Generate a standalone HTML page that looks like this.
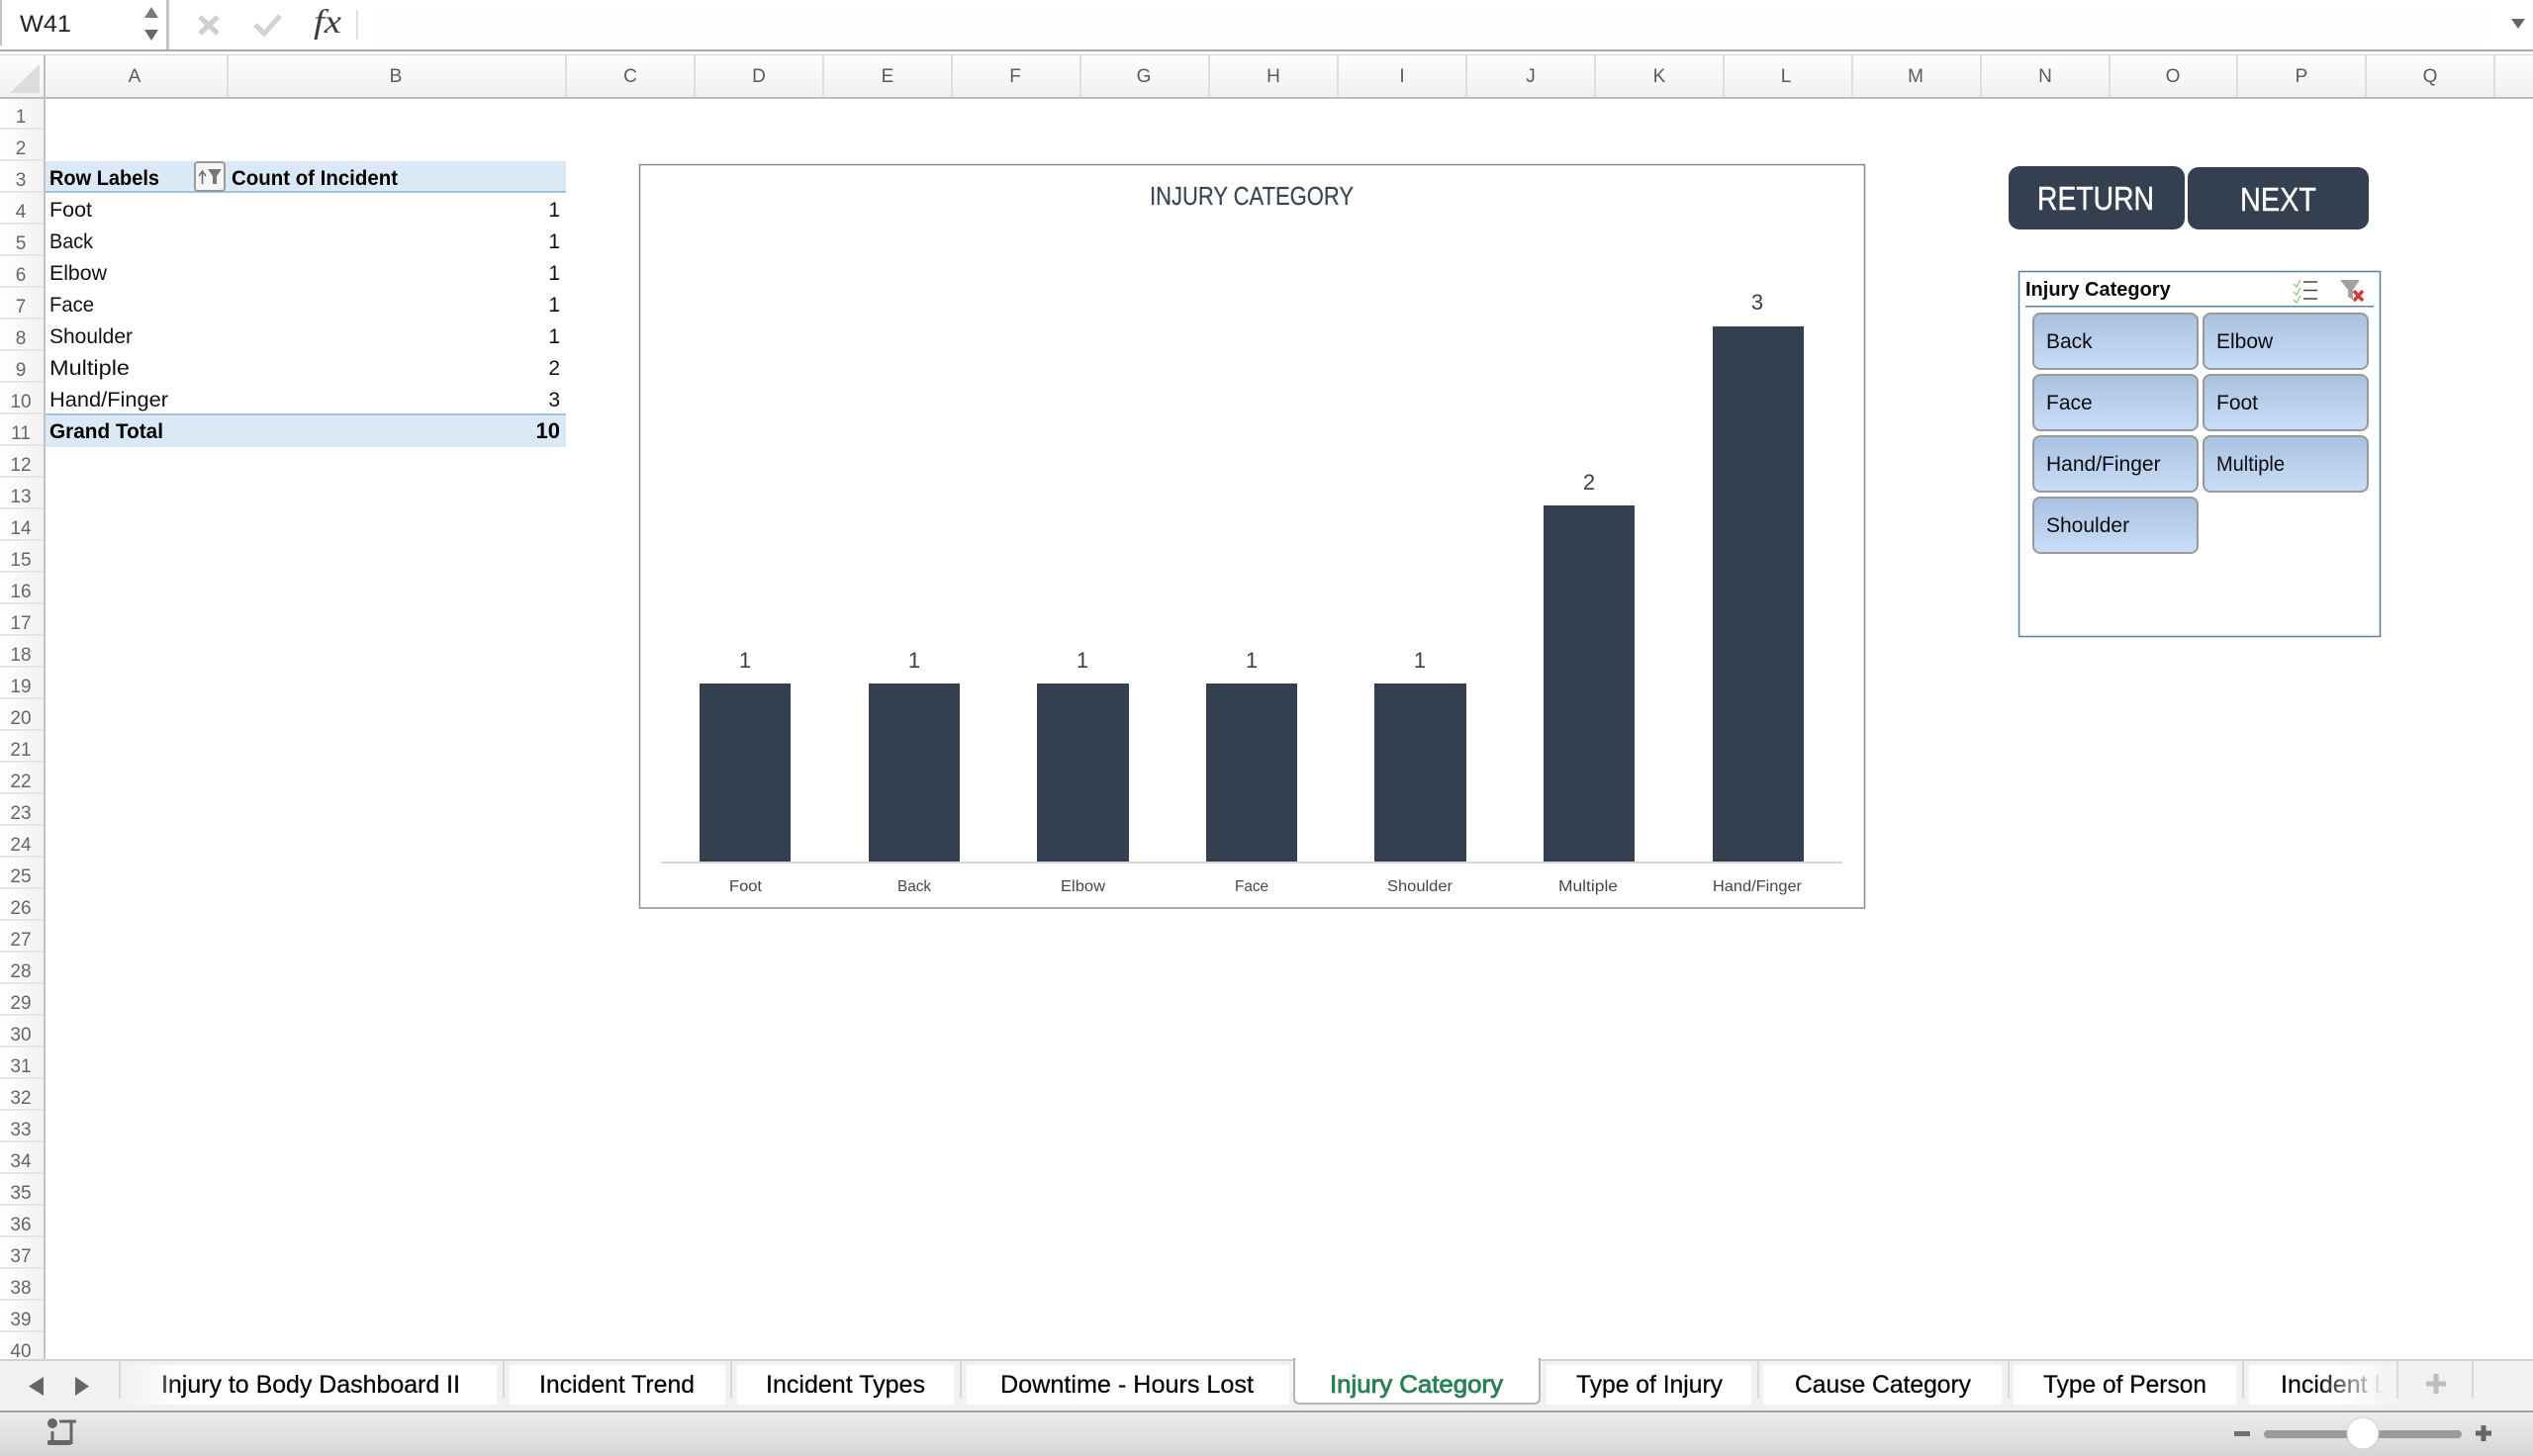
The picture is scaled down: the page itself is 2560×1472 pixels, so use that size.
<!DOCTYPE html>
<html lang="en">
<head>
<meta charset="utf-8">
<title>Injury Category</title>
<style>
html,body{margin:0;padding:0;background:#fff;width:2560px;height:1472px;overflow:hidden}
svg{display:block;position:absolute;left:0;top:0}
text{font-family:"Liberation Sans",sans-serif}
.rn{font-size:19px;fill:#666;text-anchor:middle}
.cn{font-size:19px;fill:#5a5a5a;text-anchor:middle}
.p{font-size:21px;fill:#111}
.b{font-size:21px;fill:#000;font-weight:bold}
.v{font-size:21px;fill:#111;text-anchor:end}
.d{font-size:22px;fill:#3c3f46;text-anchor:middle}
.a{font-size:16px;fill:#3f4857}
.s{font-size:21px;fill:#0c0c0c}
.t{font-size:25px;fill:#050505;stroke:#050505;stroke-width:.25px}
</style>
</head>
<body>
<svg width="2560" height="1472" viewBox="0 0 2560 1472" xmlns="http://www.w3.org/2000/svg">
<defs>
<linearGradient id="rh" x1="0" x2="1" y1="0" y2="0"><stop offset="0" stop-color="#ffffff"/><stop offset="1" stop-color="#f1f1f1"/></linearGradient>
<linearGradient id="ch" x1="0" x2="0" y1="0" y2="1"><stop offset="0" stop-color="#fdfdfd"/><stop offset="1" stop-color="#f1f1f1"/></linearGradient>
<linearGradient id="sb" x1="0" x2="0" y1="0" y2="1"><stop offset="0" stop-color="#ececec"/><stop offset="1" stop-color="#d6d6d6"/></linearGradient>
<linearGradient id="btn" x1="0" x2="0" y1="0" y2="1"><stop offset="0" stop-color="#a9c1e1"/><stop offset="1" stop-color="#c9ddf6"/></linearGradient>
<linearGradient id="fl" x1="0" x2="1" y1="0" y2="0"><stop offset="0" stop-color="#f1f1f1"/><stop offset="1" stop-color="#f1f1f1" stop-opacity="0"/></linearGradient>
<linearGradient id="fr" x1="0" x2="1" y1="0" y2="0"><stop offset="0" stop-color="#ffffff" stop-opacity="0"/><stop offset="1" stop-color="#f4f4f4"/></linearGradient>
<pattern id="rl" x="0" y="99" width="46" height="32" patternUnits="userSpaceOnUse"><rect x="0" y="30" width="46" height="2" fill="#e6e6e6"/></pattern>
<clipPath id="lastTab"><rect x="2273" y="1380" width="149" height="40"/></clipPath>
</defs>

<!-- formula bar -->
<rect x="0" y="0" width="2560" height="50" fill="#ffffff"/>
<rect x="375" y="7" width="2140" height="36" fill="#fefefe"/>
<rect x="0" y="0" width="2" height="46" fill="#c4c4c4"/>
<rect x="168" y="0" width="3" height="50" fill="#c6c6c6"/>
<text x="20" y="32" font-size="24" fill="#222" textLength="52" lengthAdjust="spacingAndGlyphs">W41</text>
<polygon points="153,7 146,18 160,18" fill="#7a7a7a"/>
<polygon points="153,41 146,30 160,30" fill="#6a6a6a"/>
<path d="M202 17 L220 34 M220 17 L202 34" stroke="#cfcfcf" stroke-width="5" fill="none"/>
<path d="M258 25 L267 34 L283 16" stroke="#d2d2d2" stroke-width="5" fill="none"/>
<text x="317" y="33" font-size="34" fill="#3c3c3c" style="font-family:'Liberation Serif',serif;font-style:italic" textLength="28" lengthAdjust="spacingAndGlyphs">fx</text>
<rect x="360" y="10" width="2" height="30" fill="#e0e0e0"/>
<polygon points="2538,19 2552,19 2545,29" fill="#666"/>
<rect x="0" y="50" width="2560" height="2" fill="#a9a9a9"/>
<rect x="0" y="55" width="2560" height="1" fill="#cfcfcf"/>

<!-- column headers -->
<rect x="0" y="56" width="2560" height="42" fill="url(#ch)"/>
<rect x="0" y="98" width="2560" height="2" fill="#bdbdbd"/>
<polygon points="10,94 40,65 40,94" fill="#dcdcdc"/>
<g fill="#dedede">
<rect x="44" y="56" width="2" height="42" fill="#bdbdbd"/>
<rect x="229" y="56" width="2" height="42"/><rect x="571" y="56" width="2" height="42"/><rect x="701" y="56" width="2" height="42"/><rect x="831" y="56" width="2" height="42"/><rect x="961" y="56" width="2" height="42"/><rect x="1091" y="56" width="2" height="42"/><rect x="1221" y="56" width="2" height="42"/><rect x="1351" y="56" width="2" height="42"/><rect x="1481" y="56" width="2" height="42"/><rect x="1611" y="56" width="2" height="42"/><rect x="1741" y="56" width="2" height="42"/><rect x="1871" y="56" width="2" height="42"/><rect x="2001" y="56" width="2" height="42"/><rect x="2131" y="56" width="2" height="42"/><rect x="2260" y="56" width="2" height="42"/><rect x="2390" y="56" width="2" height="42"/><rect x="2520" y="56" width="2" height="42"/>
</g>
<g class="cols">
<text class="cn" x="136" y="83">A</text><text class="cn" x="400" y="83">B</text><text class="cn" x="637" y="83">C</text><text class="cn" x="767" y="83">D</text><text class="cn" x="897" y="83">E</text><text class="cn" x="1026" y="83">F</text><text class="cn" x="1156" y="83">G</text><text class="cn" x="1287" y="83">H</text><text class="cn" x="1417" y="83">I</text><text class="cn" x="1547" y="83">J</text><text class="cn" x="1677" y="83">K</text><text class="cn" x="1805" y="83">L</text><text class="cn" x="1936" y="83">M</text><text class="cn" x="2067" y="83">N</text><text class="cn" x="2196" y="83">O</text><text class="cn" x="2326" y="83">P</text><text class="cn" x="2456" y="83">Q</text>
</g>

<!-- row headers -->
<rect x="0" y="100" width="45" height="1274" fill="url(#rh)"/>
<rect x="0" y="99" width="45" height="1275" fill="url(#rl)"/>
<rect x="44" y="100" width="2" height="1274" fill="#c2c2c2"/>
<g>
<text class="rn" x="21" y="124">1</text><text class="rn" x="21" y="156">2</text><text class="rn" x="21" y="188">3</text><text class="rn" x="21" y="220">4</text><text class="rn" x="21" y="252">5</text><text class="rn" x="21" y="284">6</text><text class="rn" x="21" y="316">7</text><text class="rn" x="21" y="348">8</text><text class="rn" x="21" y="380">9</text><text class="rn" x="21" y="412">10</text>
<text class="rn" x="21" y="444">11</text><text class="rn" x="21" y="476">12</text><text class="rn" x="21" y="508">13</text><text class="rn" x="21" y="540">14</text><text class="rn" x="21" y="572">15</text><text class="rn" x="21" y="604">16</text><text class="rn" x="21" y="636">17</text><text class="rn" x="21" y="668">18</text><text class="rn" x="21" y="700">19</text><text class="rn" x="21" y="732">20</text>
<text class="rn" x="21" y="764">21</text><text class="rn" x="21" y="796">22</text><text class="rn" x="21" y="828">23</text><text class="rn" x="21" y="860">24</text><text class="rn" x="21" y="892">25</text><text class="rn" x="21" y="924">26</text><text class="rn" x="21" y="956">27</text><text class="rn" x="21" y="988">28</text><text class="rn" x="21" y="1020">29</text><text class="rn" x="21" y="1052">30</text>
<text class="rn" x="21" y="1084">31</text><text class="rn" x="21" y="1116">32</text><text class="rn" x="21" y="1148">33</text><text class="rn" x="21" y="1180">34</text><text class="rn" x="21" y="1212">35</text><text class="rn" x="21" y="1244">36</text><text class="rn" x="21" y="1276">37</text><text class="rn" x="21" y="1308">38</text><text class="rn" x="21" y="1340">39</text><text class="rn" x="21" y="1372">40</text>
</g>

<!-- pivot table -->
<rect x="46" y="163" width="526" height="31" fill="#dbe9f7"/>
<rect x="46" y="193" width="526" height="2" fill="#9dc3e6"/>
<rect x="46" y="418" width="526" height="2" fill="#9dc3e6"/>
<rect x="46" y="420" width="526" height="32" fill="#dbe9f7"/>
<text class="b" x="50" y="187" textLength="111" lengthAdjust="spacingAndGlyphs">Row Labels</text>
<rect x="197" y="164" width="30" height="29" rx="3" fill="#f5f5f5" stroke="#9a9a9a" stroke-width="2"/>
<path d="M204.500 186 V175 M201 178 L204.500 173 L208 178" stroke="#666" stroke-width="1.500" fill="none"/>
<path d="M210 171 H224 L219 178 V186 H215 V178 Z" fill="#777"/>
<text class="b" x="234" y="187" textLength="168" lengthAdjust="spacingAndGlyphs">Count of Incident</text>
<text class="p" x="50" y="219" textLength="43" lengthAdjust="spacingAndGlyphs">Foot</text>
<text class="p" x="50" y="251" textLength="44" lengthAdjust="spacingAndGlyphs">Back</text>
<text class="p" x="50" y="283" textLength="58" lengthAdjust="spacingAndGlyphs">Elbow</text>
<text class="p" x="50" y="315" textLength="45" lengthAdjust="spacingAndGlyphs">Face</text>
<text class="p" x="50" y="347" textLength="84" lengthAdjust="spacingAndGlyphs">Shoulder</text>
<text class="p" x="50" y="379" textLength="81" lengthAdjust="spacingAndGlyphs">Multiple</text>
<text class="p" x="50" y="411" textLength="120" lengthAdjust="spacingAndGlyphs">Hand/Finger</text>
<text class="b" x="50" y="443" textLength="115" lengthAdjust="spacingAndGlyphs">Grand Total</text>
<text class="v" x="566" y="219">1</text><text class="v" x="566" y="251">1</text><text class="v" x="566" y="283">1</text><text class="v" x="566" y="315">1</text><text class="v" x="566" y="347">1</text><text class="v" x="566" y="379">2</text><text class="v" x="566" y="411">3</text>
<text class="b" x="566" y="443" text-anchor="end" style="font-size:22px">10</text>

<!-- chart -->
<rect x="646.500" y="166.500" width="1238" height="751.500" fill="#fff" stroke="#8a8a8a" stroke-width="1.500"/>
<text x="1162" y="207" font-size="26" fill="#3b4554" textLength="206" lengthAdjust="spacingAndGlyphs" style="stroke:#3b4554;stroke-width:.2px">INJURY CATEGORY</text>
<rect x="668" y="871" width="1194" height="2" fill="#d6d6d6"/>
<g fill="#344050">
<rect x="707" y="691" width="92" height="180"/>
<rect x="878" y="691" width="92" height="180"/>
<rect x="1048" y="691" width="93" height="180"/>
<rect x="1219" y="691" width="92" height="180"/>
<rect x="1389" y="691" width="93" height="180"/>
<rect x="1560" y="511" width="92" height="360"/>
<rect x="1731" y="330" width="92" height="541"/>
</g>
<text class="d" x="753" y="675">1</text><text class="d" x="924" y="675">1</text><text class="d" x="1094" y="675">1</text><text class="d" x="1265" y="675">1</text><text class="d" x="1435" y="675">1</text><text class="d" x="1606" y="495">2</text><text class="d" x="1776" y="313">3</text>
<text class="a" x="737" y="901" textLength="33" lengthAdjust="spacingAndGlyphs">Foot</text>
<text class="a" x="907" y="901" textLength="34" lengthAdjust="spacingAndGlyphs">Back</text>
<text class="a" x="1072" y="901" textLength="45" lengthAdjust="spacingAndGlyphs">Elbow</text>
<text class="a" x="1248" y="901" textLength="34" lengthAdjust="spacingAndGlyphs">Face</text>
<text class="a" x="1402" y="901" textLength="66" lengthAdjust="spacingAndGlyphs">Shoulder</text>
<text class="a" x="1575" y="901" textLength="60" lengthAdjust="spacingAndGlyphs">Multiple</text>
<text class="a" x="1731" y="901" textLength="90" lengthAdjust="spacingAndGlyphs">Hand/Finger</text>

<!-- buttons -->
<rect x="2030" y="168" width="178" height="64" rx="11" fill="#344050"/>
<rect x="2211" y="169" width="183" height="63" rx="11" fill="#344050"/>
<text x="2059" y="212" font-size="33" fill="#fff" textLength="118" lengthAdjust="spacingAndGlyphs" style="stroke:#fff;stroke-width:.4px">RETURN</text>
<text x="2264" y="213" font-size="33" fill="#fff" textLength="77" lengthAdjust="spacingAndGlyphs" style="stroke:#fff;stroke-width:.4px">NEXT</text>

<!-- slicer -->
<rect x="2040.500" y="274.500" width="365" height="369" fill="#fff" stroke="#5b7fa3" stroke-width="1.500"/>
<text x="2047" y="299" font-size="20" font-weight="bold" fill="#0a0a0a">Injury Category</text>
<rect x="2047" y="309" width="352" height="1.500" fill="#5b7fa3"/>
<path d="M2318 287 L2321 290 L2325 283 M2318 295 L2321 298 L2325 291 M2318 303 L2321 306 L2325 299" stroke="#9ad084" stroke-width="1.500" fill="none"/>
<path d="M2328 285 H2342 M2328 293.500 H2342 M2328 302 H2342" stroke="#444" stroke-width="1.500" fill="none"/>
<path d="M2365 283 H2385 L2378 293 V303 L2373 300 V293 Z" fill="#a2a2a2"/>
<path d="M2379 294 L2388 304 M2388 294 L2379 304" stroke="#d2383a" stroke-width="3.500" fill="none"/>
<g fill="url(#btn)" stroke="#999" stroke-width="2">
<rect x="2055" y="317" width="166" height="56" rx="7"/>
<rect x="2227" y="317" width="166" height="56" rx="7"/>
<rect x="2055" y="379" width="166" height="56" rx="7"/>
<rect x="2227" y="379" width="166" height="56" rx="7"/>
<rect x="2055" y="441" width="166" height="56" rx="7"/>
<rect x="2227" y="441" width="166" height="56" rx="7"/>
<rect x="2055" y="503" width="166" height="56" rx="7"/>
</g>
<text class="s" x="2068" y="352">Back</text>
<text class="s" x="2240" y="352">Elbow</text>
<text class="s" x="2068" y="414">Face</text>
<text class="s" x="2240" y="414">Foot</text>
<text class="s" x="2068" y="476">Hand/Finger</text>
<text class="s" x="2240" y="476" textLength="69" lengthAdjust="spacingAndGlyphs">Multiple</text>
<text class="s" x="2068" y="538">Shoulder</text>

<!-- tab bar -->
<rect x="0" y="1374" width="2560" height="53" fill="#f1f1f1"/>
<rect x="0" y="1374" width="2560" height="2" fill="#d2d2d2"/>
<polygon points="44,1392 44,1411 29,1401.500" fill="#666"/>
<polygon points="76,1392 76,1411 90,1401.500" fill="#666"/>
<g fill="#dadada">
<rect x="120" y="1376" width="2" height="38"/>
<rect x="508" y="1376" width="2" height="38"/>
<rect x="738" y="1376" width="2" height="38"/>
<rect x="970" y="1376" width="2" height="38"/>
<rect x="1776" y="1376" width="2" height="38"/>
<rect x="2029" y="1376" width="2" height="38"/>
<rect x="2266" y="1376" width="2" height="38"/>
<rect x="2422" y="1376" width="2" height="38"/>
<rect x="2498" y="1376" width="2" height="38"/>
</g>
<g fill="#fff">
<rect x="122" y="1380" width="380" height="40"/>
<rect x="515" y="1380" width="218" height="40"/>
<rect x="745" y="1380" width="219" height="40"/>
<rect x="977" y="1380" width="326" height="40"/>
<rect x="1563" y="1380" width="207" height="40"/>
<rect x="1782" y="1380" width="241" height="40"/>
<rect x="2035" y="1380" width="225" height="40"/>
<rect x="2273" y="1380" width="149" height="40"/>
</g>
<path d="M1308 1374 V1413 Q1308 1419 1314 1419 H1550 Q1556 1419 1556 1413 V1374 Z" fill="#fff" stroke="#b4b4b4" stroke-width="2"/>
<rect x="1309" y="1372" width="246" height="4" fill="#fff"/>
<text class="t" x="163" y="1408" textLength="302" lengthAdjust="spacingAndGlyphs">Injury to Body Dashboard II</text>
<rect x="122" y="1378" width="60" height="44" fill="url(#fl)"/>
<text class="t" x="545" y="1408" textLength="157" lengthAdjust="spacingAndGlyphs">Incident Trend</text>
<text class="t" x="774" y="1408" textLength="161" lengthAdjust="spacingAndGlyphs">Incident Types</text>
<text class="t" x="1011" y="1408" textLength="256" lengthAdjust="spacingAndGlyphs">Downtime - Hours Lost</text>
<text class="t" x="1344" y="1408" textLength="175" lengthAdjust="spacingAndGlyphs" style="fill:#2a8055;stroke:#2a8055;stroke-width:.8px">Injury Category</text>
<text class="t" x="1593" y="1408" textLength="148" lengthAdjust="spacingAndGlyphs">Type of Injury</text>
<text class="t" x="1814" y="1408" textLength="178" lengthAdjust="spacingAndGlyphs">Cause Category</text>
<text class="t" x="2065" y="1408" textLength="165" lengthAdjust="spacingAndGlyphs">Type of Person</text>
<g clip-path="url(#lastTab)"><text class="t" x="2305" y="1408">Incident Log</text></g>
<rect x="2340" y="1379" width="70" height="42" fill="url(#fr)"/>
<rect x="2410" y="1379" width="12" height="42" fill="#f4f4f4"/>
<path d="M2462 1389 V1409 M2452 1399 H2472" stroke="#bdbdbd" stroke-width="5" fill="none"/>

<!-- status bar -->
<rect x="0" y="1428" width="2560" height="44" fill="url(#sb)"/>
<rect x="0" y="1426" width="2560" height="2" fill="#a5a5a5"/>
<circle cx="53" cy="1439" r="5" fill="#666"/>
<path d="M60 1437 H77 M72 1437 V1460 M53 1447 V1457" stroke="#666" stroke-width="3" fill="none"/>
<rect x="48" y="1456" width="24" height="5" rx="1.500" fill="#666"/>
<rect x="2258" y="1447" width="16" height="5" fill="#707070"/>
<rect x="2288" y="1446" width="200" height="8" rx="4" fill="#9b9b9b"/>
<circle cx="2388" cy="1449" r="16" fill="#fff" stroke="#cfcfcf" stroke-width="1"/>
<path d="M2510 1441 V1457 M2502 1449 H2518" stroke="#666" stroke-width="5" fill="none"/>
</svg>
</body>
</html>
